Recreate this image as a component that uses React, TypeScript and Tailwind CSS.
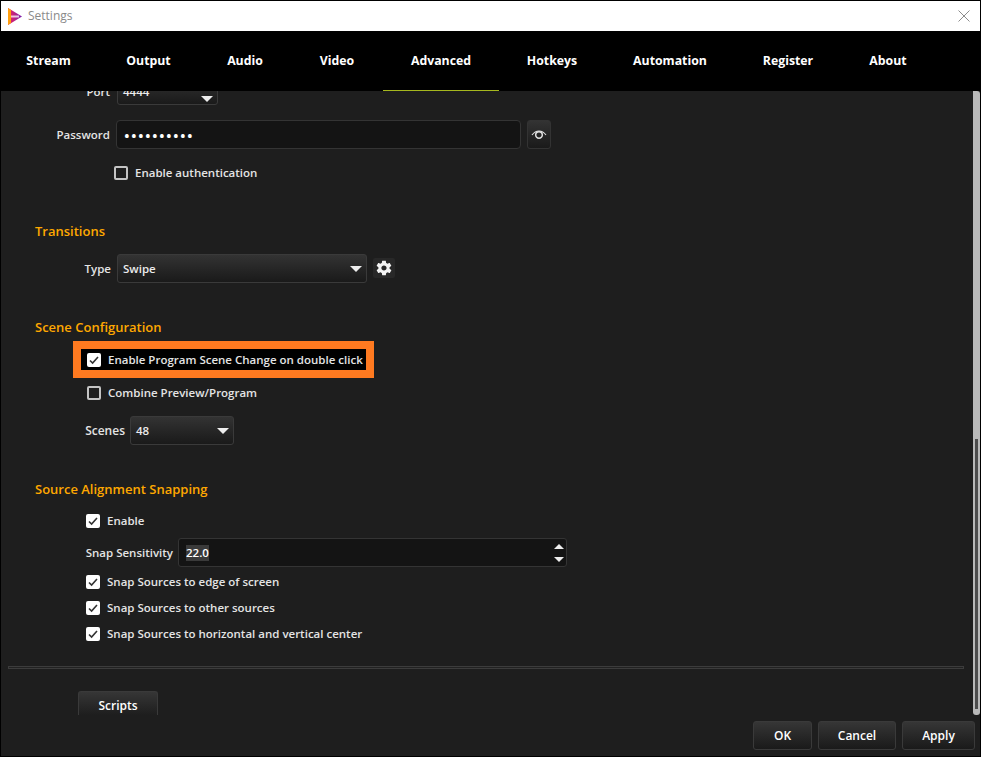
import { ReactNode } from "react";
import { IoMdSettings } from "react-icons/io";

const tabs = [
  { name: "Stream", width: "w-[99px]" },
  { name: "Output", width: "w-[101px]" },
  { name: "Audio", width: "w-[92px]" },
  { name: "Video", width: "w-[92px]" },
  { name: "Advanced", width: "w-[116px]", active: true },
  { name: "Hotkeys", width: "w-[106px]" },
  { name: "Automation", width: "w-[130px]" },
  { name: "Register", width: "w-[106px]" },
  { name: "About", width: "w-[94px]" },
];

const Caret = ({ className = "" }: { className?: string }) => (
  <svg width="12" height="6" viewBox="0 0 12 6" className={`shrink-0 ${className}`}>
    <path d="M0 0h12L6 6z" fill="#eeeeee" />
  </svg>
);

const Check = ({ checked = false }: { checked?: boolean }) => (
  <span
    className={`flex h-[14px] w-[14px] shrink-0 items-center justify-center rounded-[2px] ${
      checked ? "bg-white" : "border-2 border-[#c4c4c4]"
    }`}
  >
    {checked && (
      <svg width="12" height="12" viewBox="0 0 12 12">
        <path d="M2 6.5l2.6 2.6L10 3" fill="none" stroke="#333333" strokeWidth="1.6" />
      </svg>
    )}
  </span>
);

const CheckRow = ({
  label,
  checked,
  className = "",
}: {
  label: string;
  checked?: boolean;
  className?: string;
}) => (
  <div className={`flex h-[16px] items-center gap-[7px] ${className}`}>
    <Check checked={checked} />
    <span className="whitespace-nowrap text-[#e4e4e4]">{label}</span>
  </div>
);

const Heading = ({ children, className = "" }: { children: ReactNode; className?: string }) => (
  <h2 className={`h-[18px] pl-[34px] text-[13px] leading-[18px] font-semibold text-[#ffa800] ${className}`}>
    {children}
  </h2>
);

const Select = ({
  value,
  className = "",
  caretClassName = "",
}: {
  value: string;
  className?: string;
  caretClassName?: string;
}) => (
  <div
    className={`flex items-center justify-between rounded-[3px] border border-[#3a3a3a] bg-gradient-to-b from-[#333333] to-[#1a1a1a] pr-[4px] pl-[5px] text-[#ececec] ${className}`}
  >
    <span>{value}</span>
    <Caret className={caretClassName} />
  </div>
);

const Button = ({ label, className = "" }: { label: string; className?: string }) => (
  <button
    className={`h-[29px] rounded-[3px] border border-[#3a3a3a] bg-gradient-to-b from-[#363636] to-[#1a1a1a] text-[12px] font-semibold text-white ${className}`}
  >
    {label}
  </button>
);

export default function App() {
  return (
    <div className="flex h-[757px] w-[981px] flex-col overflow-hidden border border-black bg-[#1e1e1e] font-['Open_Sans',sans-serif] text-[11.5px] leading-[16px] font-semibold">
      {/* TITLE BAR */}
      <div className="flex h-[30px] shrink-0 items-center bg-white pr-[10px] pl-[7px]">
        <svg width="14" height="17" viewBox="0 0 14 17" className="shrink-0">
          <defs>
            <linearGradient id="logo" x1="0" y1="0" x2="1" y2="0">
              <stop offset="0" stopColor="#f0245c" />
              <stop offset="1" stopColor="#7a1fb0" />
            </linearGradient>
          </defs>
          <path d="M0 0l14 8.5L0 17z" fill="url(#logo)" />
          <path d="M0 0l3 2v13l-3 2z" fill="#ffa010" />
          <path d="M3 7.5h8v2H3z" fill="#ffffff" opacity="0.75" />
        </svg>
        <span className="ml-[6px] text-[12px] font-normal text-[#8a8a8a]">Settings</span>
        <svg width="12" height="12" viewBox="0 0 12 12" className="ml-auto">
          <path d="M.5.5l11 11M11.5.5l-11 11" stroke="#8c8c8c" strokeWidth="1" />
        </svg>
      </div>

      {/* TABS */}
      <div className="-ml-[2px] flex h-[60px] shrink-0 bg-black">
        {tabs.map((tab) => (
          <div
            key={tab.name}
            className={`flex items-center justify-center border-b text-[12.3px] font-bold text-white ${tab.width} ${
              tab.active ? "border-[#a6b81e]" : "border-black"
            }`}
          >
            {tab.name}
          </div>
        ))}
      </div>

      {/* SCROLLED SETTINGS */}
      <div className="flex h-[624px] shrink-0">
        <div className="min-w-0 flex-1 overflow-hidden">
          <div className="-mt-[14px] flex flex-col">
            <div className="flex items-center">
              <span className="w-[109px] pt-[1px] text-right text-[#e4e4e4]">Port</span>
              <Select value="4444" className="ml-[7px] h-[28px] w-[101px] pt-[1px]" caretClassName="translate-y-[7px]" />
            </div>

            <div className="mt-[15px] flex items-center">
              <span className="w-[109px] text-right text-[#e4e4e4]">Password</span>
              <div className="ml-[6px] flex h-[29px] w-[405px] items-center rounded-[4px] border border-[#343434] bg-[#141414] pl-[7px] text-[15px] tracking-[1.35px] text-white">
                ••••••••••
              </div>
              <div className="ml-[6px] flex h-[29px] w-[24px] items-center justify-center rounded-[3px] border border-[#333333] bg-gradient-to-b from-[#333333] to-[#1a1a1a]">
                <svg width="16" height="10" viewBox="0 0 16 10">
                  <path d="M1 5c2-2.6 4.4-4 7-4s5 1.4 7 4" fill="none" stroke="#e0e0e0" strokeWidth="1.2" />
                  <path d="M4.7 5a3.3 3.3 0 1 0 6.6 0 3.3 3.3 0 1 0-6.6 0z" fill="none" stroke="#e0e0e0" strokeWidth="1.5" />
                </svg>
              </div>
            </div>

            <CheckRow label="Enable authentication" className="mt-[16px] ml-[113px]" />

            <Heading className="mt-[41px]">Transitions</Heading>
            <div className="mt-[14px] flex items-center">
              <span className="w-[110px] text-right text-[#e4e4e4]">Type</span>
              <Select value="Swipe" className="ml-[6px] h-[29px] w-[250px]" />
              <div className="mb-[2px] ml-[6px] flex h-[20px] w-[22px] items-center justify-center rounded-[2px] bg-[#282828]">
                <IoMdSettings size={18} color="#f4f4f4" />
              </div>
            </div>

            <Heading className="mt-[35px]">Scene Configuration</Heading>
            <div className="mt-[5px] ml-[72px] flex h-[37px] w-[301px] items-center gap-[7px] border-[8px] border-[#ff7a20] bg-black pl-[6px]">
              <Check checked />
              <span className="whitespace-nowrap text-[#e4e4e4]">Enable Program Scene Change on double click</span>
            </div>
            <CheckRow label="Combine Preview/Program" className="mt-[7px] ml-[86px]" />
            <div className="mt-[15px] flex items-center">
              <span className="w-[124px] text-right text-[12px] text-[#e4e4e4]">Scenes</span>
              <Select value="48" className="ml-[5px] h-[29px] w-[104px]" />
            </div>

            <Heading className="mt-[35px]">Source Alignment Snapping</Heading>
            <CheckRow checked label="Enable" className="mt-[15px] ml-[85px]" />
            <div className="mt-[9px] flex items-center">
              <span className="w-[172px] text-right text-[#e4e4e4]">Snap Sensitivity</span>
              <div className="ml-[5px] flex h-[29px] w-[389px] items-center justify-between rounded-[3px] border border-[#343434] bg-[#141414] pr-[2px] pl-[7px] text-white">
                <span className="bg-[#3a3a3a] leading-[16px]">22.0</span>
                <div className="flex flex-col gap-[8px]">
                  <svg width="10" height="5" viewBox="0 0 10 5">
                    <path d="M0 5h10L5 0z" fill="#eeeeee" />
                  </svg>
                  <svg width="10" height="5" viewBox="0 0 10 5">
                    <path d="M0 0h10L5 5z" fill="#eeeeee" />
                  </svg>
                </div>
              </div>
            </div>
            <CheckRow checked label="Snap Sources to edge of screen" className="mt-[7px] ml-[85px]" />
            <CheckRow checked label="Snap Sources to other sources" className="mt-[10px] ml-[85px]" />
            <CheckRow checked label="Snap Sources to horizontal and vertical center" className="mt-[10px] ml-[85px]" />

            <div className="mt-[24px] ml-[7px] h-[3px] w-[956px] border border-[#3c3c3c] bg-[#222222]" />

            <div className="mt-[22px] ml-[77px] flex h-[24px] w-[80px] items-center justify-center rounded-t-[3px] border-x border-t border-[#3a3a3a] bg-gradient-to-b from-[#363636] to-[#1e1e1e] pt-[4px] text-[12px] font-semibold text-white">
              Scripts
            </div>
          </div>
        </div>

        {/* SCROLLBAR */}
        <div className="flex w-[7px] shrink-0 justify-center rounded-tr-[3px] rounded-b-[3px] bg-[#b9b9b9]">
          <div className="mt-[348px] h-[270px] w-[3px] bg-[#4d4d4d]" />
        </div>
      </div>

      {/* FOOTER */}
      <div className="flex flex-1 items-start justify-end gap-[6px] pt-[6px] pr-[5px]">
        <Button label="OK" className="w-[59px]" />
        <Button label="Cancel" className="w-[78px]" />
        <Button label="Apply" className="w-[73px]" />
      </div>
    </div>
  );
}
